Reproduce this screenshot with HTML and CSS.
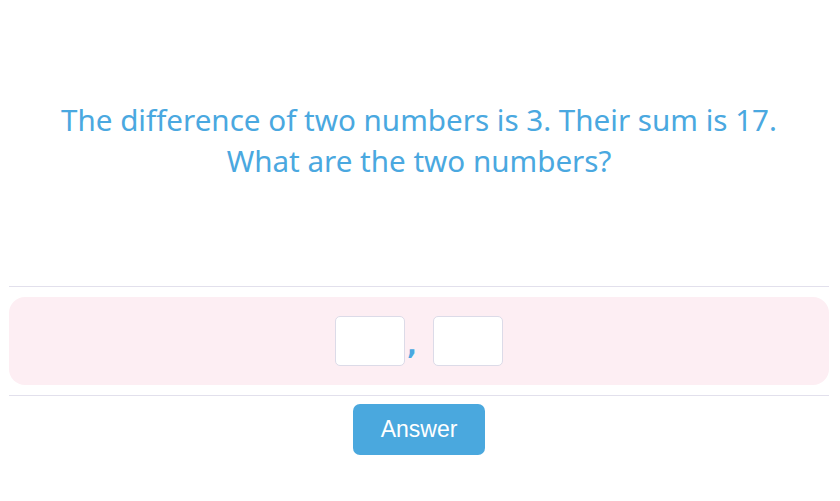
FILE: index.html
```html
<!DOCTYPE html>
<html>
<head>
  <title>Question</title>
  <link rel="stylesheet" href="styles.css">
</head>
<body>

<div class="container">
  <div class="question">
    <p>The difference of two numbers is 3. Their sum is 17.<br>What are the two numbers?</p>
  </div>
  <div class="answer-box">
    <input type="text" class="cell">
    <span class="comma">,</span>
    <input type="text" class="cell">
  </div>
  <div class="actions">
    <button type="button">Answer</button>
  </div>
</div>

</body>
</html>
```

FILE: styles.css
```css
body {
  margin: 0;
  font-family: "Noto Sans", sans-serif;
  background: #fff;
}
.container {
  width: 820px;
  margin-left: 9px;
}
.question {
  height: 287px;
  border-bottom: 1px solid #e2e0ec;
  display: flex;
  align-items: center;
  justify-content: center;
  box-sizing: border-box;
  padding-bottom: 6px;
}
.question p {
  margin: 0;
  color: #4aa8e0;
  font-size: 29.6px;
  line-height: 41px;
  text-align: center;
}
.answer-box {
  margin-top: 10px;
  height: 88px;
  background: #fdeef3;
  border-radius: 16px;
  display: flex;
  align-items: center;
  justify-content: center;
}
.cell {
  width: 70px;
  height: 50px;
  box-sizing: border-box;
  border: 1px solid #dcdbe8;
  border-radius: 5px;
  background: #fff;
  outline: none;
}
.comma {
  color: #4aa8e0;
  font-family: "DejaVu Sans", sans-serif;
  font-size: 26px;
  font-weight: bold;
  width: 28px;
  padding-left: 2px;
  margin-top: 8px;
  box-sizing: border-box;
}
.actions {
  margin-top: 10px;
  border-top: 1px solid #e2e0ec;
  padding-top: 8px;
  text-align: center;
}
button {
  background-color: #4aa8de;
  color: white;
  font-family: "Liberation Sans", Arial, sans-serif;
  font-size: 23px;
  width: 132px;
  height: 51px;
  border: none;
  border-radius: 7px;
  cursor: pointer;
}
```
